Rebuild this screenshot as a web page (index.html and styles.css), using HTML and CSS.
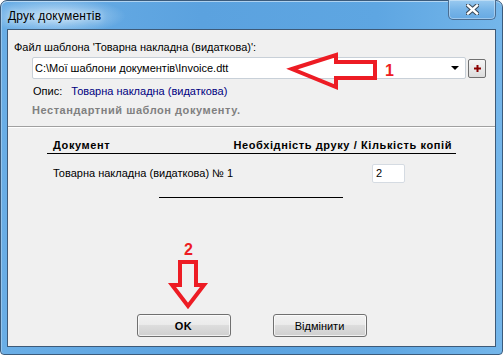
FILE: index.html
```html
<!DOCTYPE html>
<html lang="uk">
<head>
<meta charset="UTF-8">
<meta name="viewport" content="width=device-width, initial-scale=1.0">
<title>Друк документів</title>
<link rel="stylesheet" href="styles.css">
</head>
<body>

<div class="window">
    <!-- Title bar -->
    <div class="titlebar">
        <span class="title">Друк документів</span>
        <button class="close-btn" aria-label="Закрити">
            <svg width="13" height="11" viewBox="0 0 13 11">
                <path d="M2 1.5 L11 9.5 M11 1.5 L2 9.5" stroke="#3a4a5a" stroke-width="4.5" stroke-linecap="square"/>
                <path d="M2 1.5 L11 9.5 M11 1.5 L2 9.5" stroke="#ffffff" stroke-width="2.4" stroke-linecap="square"/>
            </svg>
        </button>
    </div>

    <div class="client">
        <!-- Template selection -->
        <div class="template-panel">
            <div class="label">Файл шаблона 'Товарна накладна (видаткова)':</div>
            <div class="combo-row">
                <div class="combo">
                    <span class="combo-text">C:\Мої шаблони документів\Invoice.dtt</span>
                    <span class="caret"></span>
                </div>
                <button class="add-btn" aria-label="Додати">
                    <svg width="7" height="7" viewBox="0 0 7 7">
                        <path d="M0 2.5 H7 V4.5 H0 Z M2.5 0 H4.5 V7 H2.5 Z" fill="#8b0000"/>
                    </svg>
                </button>
            </div>
            <div class="desc">
                <span class="desc-label">Опис:</span>
                <span class="desc-value">Товарна накладна (видаткова)</span>
            </div>
            <div class="warning">Нестандартний шаблон документу.</div>
        </div>

        <!-- Documents -->
        <div class="docs-panel">
            <div class="docs-table">
                <div class="docs-head">
                    <span>Документ</span>
                    <span>Необхідність друку / Кількість копій</span>
                </div>
                <div class="docs-row">
                    <span>Товарна накладна (видаткова) № 1</span>
                    <input class="copies" type="text" value="2">
                </div>
            </div>
            <div class="short-line"></div>
            <div class="actions">
                <button class="btn btn-ok">OK</button>
                <button class="btn">Відмінити</button>
            </div>
        </div>
    </div>

    <!-- Red annotation arrows -->
    <svg class="annotations" width="503" height="355" viewBox="0 0 503 355">
        <polygon points="292,69 336,55 336,62 375,62 375,78 336,78 336,87"
                 fill="none" stroke="#ed1c24" stroke-width="4" stroke-linejoin="miter"/>
        <text x="385" y="76" class="mark">1</text>
        <polygon points="180,262 196,262 196,285 204,285 188,306 172,285 180,285"
                 fill="none" stroke="#ed1c24" stroke-width="4" stroke-linejoin="miter"/>
        <text x="184" y="255" class="mark">2</text>
    </svg>
</div>

</body>
</html>
```

FILE: styles.css
```css
/* Reset */
* {
    box-sizing: border-box;
    margin: 0;
    padding: 0;
}

body {
    width: 503px;
    height: 355px;
    overflow: hidden;
    background: #ffffff;
    font-family: 'Liberation Sans', Arial, sans-serif;
    font-size: 11px;
    color: #000;
}

/* Window frame */
.window {
    position: relative;
    width: 503px;
    height: 355px;
    display: flex;
    flex-direction: column;
    background: linear-gradient(90deg, #6aaee6 0%, #5ba2df 40%, #5ea6e2 75%, #74b6ea 100%);
    border: 1px solid #3b5b7c;
    border-radius: 7px 7px 4px 4px;
    box-shadow: inset 0 1px 0 rgba(255, 255, 255, 0.5), inset 1px 0 0 rgba(255, 255, 255, 0.3);
}

.titlebar {
    height: 28px;
    display: flex;
    align-items: flex-start;
    justify-content: space-between;
    padding-left: 7px;
    background: radial-gradient(ellipse 70px 18px at 55px 15px, rgba(225, 240, 252, 0.75), rgba(225, 240, 252, 0) 100%);
}

.title {
    margin-top: 8px;
    font-size: 12px;
    letter-spacing: 0.2px;
    color: #000;
    text-shadow: 0 0 6px #e8f4ff;
}

.close-btn {
    width: 48px;
    height: 20px;
    margin-top: -1px;
    margin-right: 6px;
    display: flex;
    align-items: center;
    justify-content: center;
    border: 1px solid #4a6d92;
    border-top: none;
    border-radius: 0 0 5px 5px;
    background: linear-gradient(#9acaf0, #78b5e8 50%, #66a9e3);
    box-shadow: inset 0 0 0 1px rgba(255, 255, 255, 0.35);
}

/* Client area */
.client {
    flex: 1;
    margin: 0 6px 7px 6px;
    display: flex;
    flex-direction: column;
    background: #f0f0f0;
    border: 1px solid #3e5a78;
}

.template-panel {
    height: 97px;
    padding: 11px 0 0 6px;
    border-bottom: 1px solid #a0a0a0;
    box-shadow: 0 1px 0 #ffffff;
}

.label {
    line-height: 13px;
}

.combo-row {
    display: flex;
    align-items: center;
    gap: 2px;
    margin: 3px 0 0 18px;
}

.combo {
    width: 434px;
    height: 22px;
    display: flex;
    align-items: center;
    justify-content: space-between;
    padding: 0 6px 0 2px;
    background: #ffffff;
    border: 1px solid #c8d0d8;
    border-radius: 2px;
}

.combo-text {
    font-size: 11px;
}

.caret {
    width: 0;
    height: 0;
    border-left: 4px solid transparent;
    border-right: 4px solid transparent;
    border-top: 4px solid #000;
}

.add-btn {
    width: 18px;
    height: 19px;
    display: flex;
    align-items: center;
    justify-content: center;
    background: linear-gradient(#f6f6f6, #dcdcdc);
    border: 1px solid #707070;
    border-radius: 2px;
}

.desc {
    margin: 6px 0 0 19px;
    line-height: 13px;
}

.desc-value {
    margin-left: 6px;
    color: #000080;
}

.warning {
    margin: 6px 0 0 18px;
    line-height: 13px;
    font-weight: bold;
    letter-spacing: 0.55px;
    color: #808080;
}

/* Documents list */
.docs-panel {
    flex: 1;
    display: flex;
    flex-direction: column;
    padding-top: 12px;
}

.docs-table {
    width: 409px;
    margin-left: 39px;
}

.docs-head {
    display: flex;
    justify-content: space-between;
    padding: 0 4px 1px 6px;
    line-height: 13px;
    font-weight: bold;
    letter-spacing: 0.6px;
    border-bottom: 1px solid #000;
}

.docs-row {
    display: flex;
    align-items: center;
    justify-content: space-between;
    height: 36px;
    padding: 2px 0 0 6px;
}

.copies {
    width: 33px;
    height: 19px;
    margin-right: 51px;
    padding: 0 3px;
    font-family: inherit;
    font-size: 11px;
    background: #ffffff;
    border: 1px solid #d5dbe2;
    border-radius: 2px;
    outline: none;
}

.short-line {
    width: 184px;
    height: 1px;
    margin: 7px 0 0 151px;
    background: #000;
}

.actions {
    margin-top: auto;
    margin-bottom: 9px;
    display: flex;
    justify-content: center;
    gap: 42px;
}

.btn {
    width: 94px;
    height: 23px;
    font-family: inherit;
    font-size: 11px;
    font-weight: normal;
    color: #000;
    background: linear-gradient(#f2f2f2 0%, #ebebeb 45%, #dddddd 50%, #cfcfcf 100%);
    border: 1px solid #707070;
    border-radius: 3px;
    box-shadow: inset 0 0 0 1px rgba(255, 255, 255, 0.7);
}

.btn-ok {
    font-weight: bold;
    letter-spacing: 0.5px;
}

/* Annotations overlay */
.annotations {
    position: absolute;
    top: -1px;
    left: -1px;
    pointer-events: none;
}

.mark {
    font-family: 'Liberation Sans', Arial, sans-serif;
    font-weight: bold;
    font-size: 16px;
    fill: #ed1c24;
}
```
